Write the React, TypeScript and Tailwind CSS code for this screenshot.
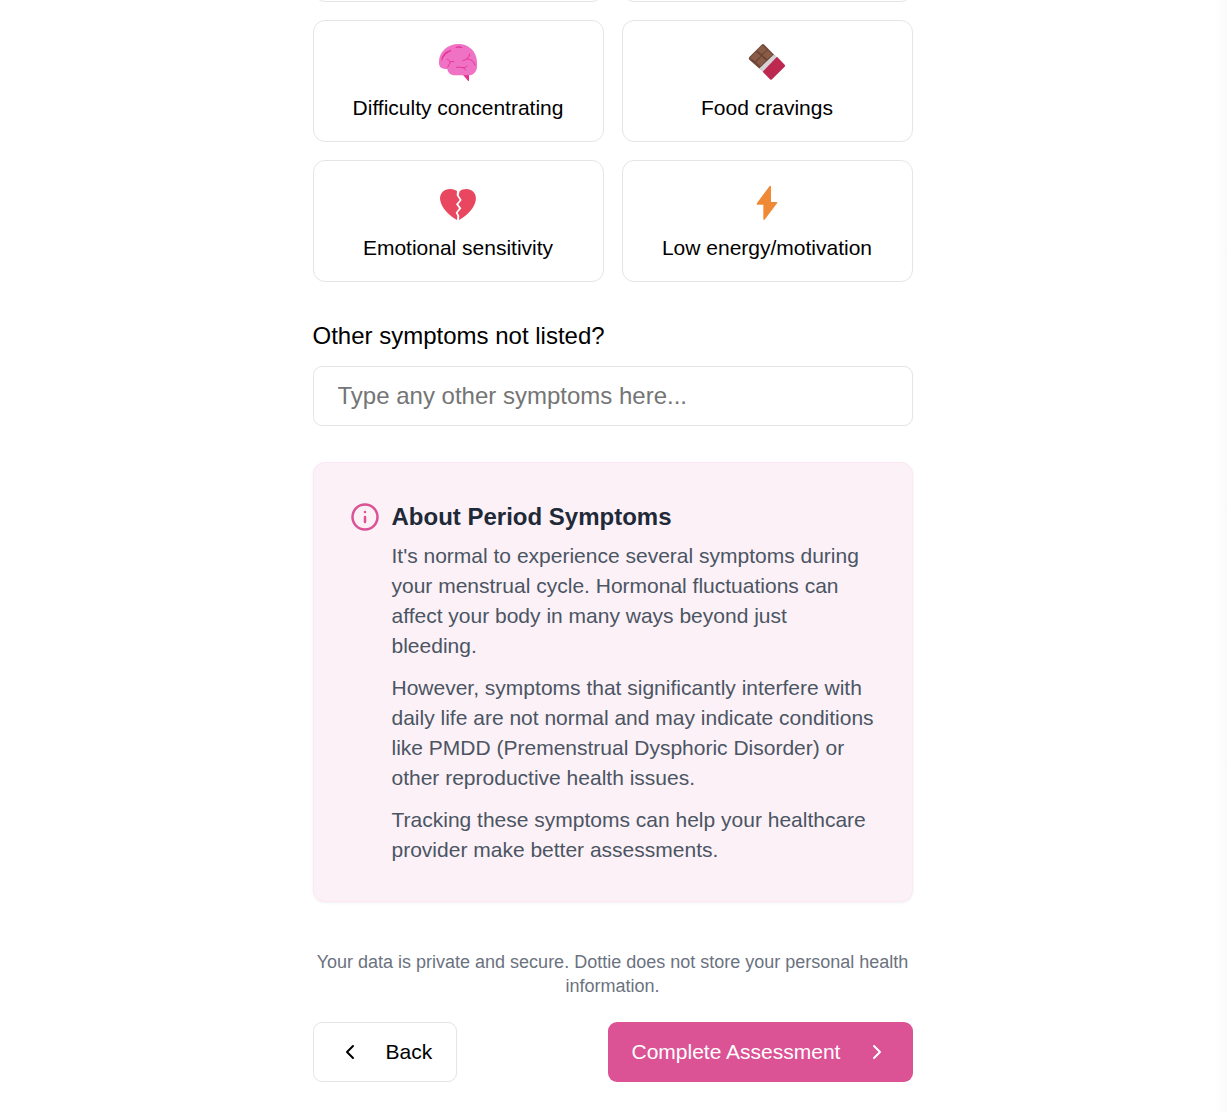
import type { ReactNode } from "react";
import { ChevronLeft, ChevronRight, Info } from "lucide-react";

function BrainIcon() {
  return (
    <svg width="41" height="38" viewBox="30 27 123 114" fill="none">
      <path d="M103 121H123V140Q122 142 120 140Z" fill="#e5308f" />
      <path
        d="M92 30C58 30 33 54 33 84V88C33 99 42 106 54 105H58C59 115 68 124 80 124H122C136 124 147 112 147 98V84C146 52 122 30 92 30Z"
        fill="#ef72c4"
      />
      <g fill="#e5308f">
        <path d="M82 41C87 35 98 35 103 41L100 43Q93 39 85 42Z" />
        <path d="M40 80C41 64 53 52 66 49L68 46L69 52C57 56 47 64 42 80Z" />
      </g>
      <g stroke="#e5308f" strokeWidth="2.8" strokeLinecap="round">
        <path d="M58 76C63 78 66 81 66 85C66 91 61 94 59 99M66 84C69 82 73 82 77 83" />
        <path d="M105 80C116 78 124 70 125 60M117 75C129 75 138 82 141 94" />
        <path d="M85 100C94 98 99 101 105 101C111 101 115 98 117 96M105 101C109 102 111 105 112 108" />
      </g>
    </svg>
  );
}

function ChocolateIcon() {
  return (
    <svg width="41" height="38" viewBox="27 27 123 114" fill="none">
      <path d="M34 69L71 32Q75 28 79 32L112 66L68 107L34 77Q31 73 34 69Z" fill="#70493a" />
      <g fill="#8a5c47">
        <path d="M58 49L73 34L86 47L71 60Z" />
        <path d="M38 70L54 54L68 65L52 82L38 74Z" />
        <path d="M74 63L90 49L104 64L88 76Z" />
        <path d="M55 84L70 68L84 80L67 98Z" />
      </g>
      <path
        d="M60 57L70 64L74 60M40 77L52 83L67 70M76 70L88 77L102 66M58 90L68 99L82 84"
        stroke="#623d30"
        strokeWidth="2"
      />
      <path d="M107 62L118 70L76 115L63 104Z" fill="#d6d3d6" />
      <path d="M117 68L140 92Q143 95 140 98L102 136Q99 139 96 136L74 113Z" fill="#bc2850" />
    </svg>
  );
}

function BrokenHeartIcon() {
  return (
    <svg width="41" height="38" viewBox="30 21 123 114" fill="#e8475f">
      <path d="M87 45C77 38 63 37 52 42C40 48 34 60 37 74C41 96 64 119 87 132L88 120L83 110L93 97L84 85L95 72L86 58Z" />
      <path d="M95 46C103 39 117 37 128 42C140 48 146 60 143 74C139 96 117 119 93 132L94 120L89 110L100 97L91 85L101 72L92 58Z" />
    </svg>
  );
}

function LightningIcon() {
  return (
    <svg width="41" height="38" viewBox="27 21 123 114" fill="#f08936">
      <path d="M95 30Q99 28 99 33L99 78H116Q119 79 117 82L81 130Q77 134 76 129V86H58Q55 85 57 81Z" />
    </svg>
  );
}

function SymptomCard({ icon, label }: { icon: ReactNode; label: string }) {
  return (
    <button className="flex h-[122px] flex-col items-center rounded-xl border border-[#e5e5e5] bg-white pt-[22px]">
      {icon}
      <span className="mt-3 text-[21px] leading-[30px] whitespace-nowrap">{label}</span>
    </button>
  );
}

export default function App() {
  return (
    <div className="flex h-[1112px] w-full overflow-hidden bg-white font-['Liberation_Sans',Arial,sans-serif] text-black">
      <main className="ml-[312.5px] w-[600px] shrink-0">
        <div className="grid h-[2px] grid-cols-2 content-end gap-[18px] overflow-hidden">
          <div className="h-[122px] rounded-xl border border-[#e5e5e5]" />
          <div className="h-[122px] rounded-xl border border-[#e5e5e5]" />
        </div>
        <div className="mt-[18px] grid grid-cols-2 gap-[18px]">
          <SymptomCard icon={<BrainIcon />} label="Difficulty concentrating" />
          <SymptomCard icon={<ChocolateIcon />} label="Food cravings" />
          <SymptomCard icon={<BrokenHeartIcon />} label="Emotional sensitivity" />
          <SymptomCard icon={<LightningIcon />} label="Low energy/motivation" />
        </div>

        <h2 className="mt-9 text-2xl leading-9">Other symptoms not listed?</h2>
        <input
          className="mt-3 block h-[60px] w-full rounded-[9px] border border-[#e5e5e5] px-6 text-2xl placeholder:text-[#757575]"
          placeholder="Type any other symptoms here..."
        />

        <section className="mt-9 flex h-[440px] gap-3 rounded-xl border border-[#fce7f3] bg-[#fbf1f7] p-9 shadow-[0_1px_3px_rgba(0,0,0,0.06)]">
          <Info size={30} className="mt-[3px] shrink-0 text-[#db5295]" />
          <div className="text-[21px] leading-[30px] text-[#4b5563]">
            <h3 className="mb-1.5 text-2xl leading-9 font-bold text-[#1f2937]">About Period Symptoms</h3>
            <p>
              It's normal to experience several symptoms during your menstrual cycle. Hormonal
              fluctuations can affect your body in many ways beyond just bleeding.
            </p>
            <p className="mt-3">
              However, symptoms that significantly interfere with daily life are not normal and may
              indicate conditions like PMDD (Premenstrual Dysphoric Disorder) or other reproductive
              health issues.
            </p>
            <p className="mt-3">
              Tracking these symptoms can help your healthcare provider make better assessments.
            </p>
          </div>
        </section>

        <p className="mt-12 text-center text-lg leading-6 text-[#6b7280]">
          Your data is private and secure. Dottie does not store your personal health information.
        </p>

        <div className="mt-6 flex justify-between text-[21px] leading-[30px]">
          <button className="flex h-[60px] w-36 items-center gap-6 rounded-[9px] border border-[#e5e5e5] px-6 whitespace-nowrap">
            <ChevronLeft size={24} className="shrink-0" />
            Back
          </button>
          <button className="flex h-[60px] w-[305px] items-center justify-between rounded-[9px] bg-[#db5295] px-6 whitespace-nowrap text-white">
            Complete Assessment
            <ChevronRight size={24} className="shrink-0" />
          </button>
        </div>
      </main>
      <div className="ml-auto w-3 bg-linear-to-r from-white to-[#fafafa]" />
    </div>
  );
}
